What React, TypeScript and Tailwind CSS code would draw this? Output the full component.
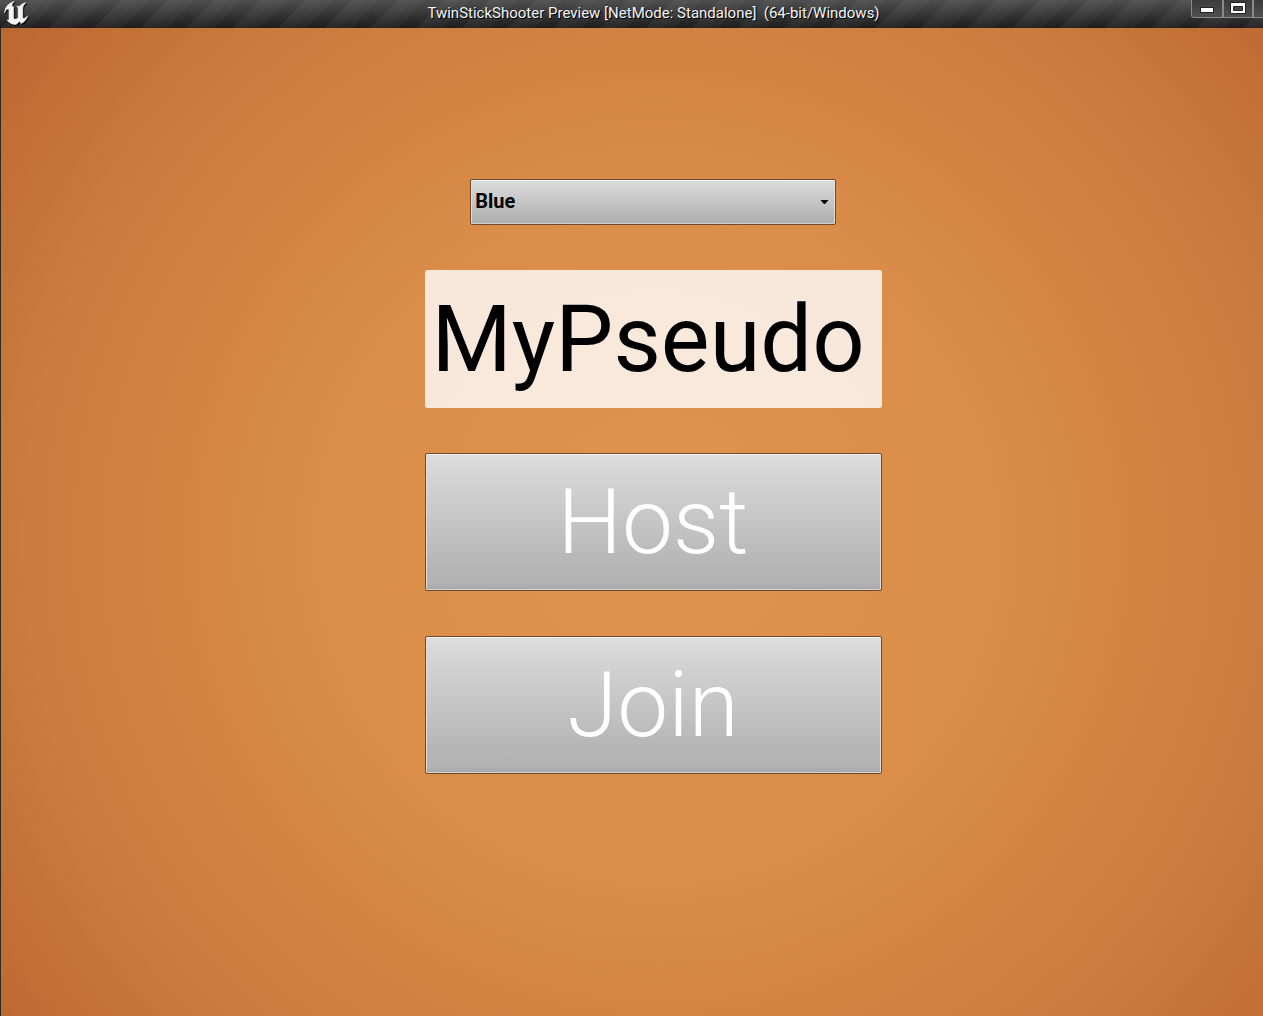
import { useState } from "react";

const buttonSkin =
  "rounded-[2px] border border-[#6f4a2c] bg-[linear-gradient(to_bottom,#dddddd_0%,#d6d6d6_12%,#c6c6c6_48%,#b5b5b5_82%,#b3b3b3_94%,#a8a8a8_100%)] shadow-[inset_0_1px_0_#f4f4f4,inset_0_-1px_0_#d2d2d2,inset_1px_0_0_#dedede,inset_-1px_0_0_#dedede]";

const captionButton =
  "flex h-[18px] items-start justify-center border border-t-0 border-[#8a8a8a] bg-linear-to-b from-[#3c3c3c] to-[#505050] pt-0.5";

function EngineLogo() {
  return (
    <svg className="h-6 w-6 drop-shadow-[1px_1px_0_#000000]" viewBox="4.3 4.4 15 15.2" preserveAspectRatio="none" fill="#f4f4f4" stroke="#f4f4f4" strokeWidth="0.3" aria-hidden="true">
      <path d="M19.13 13.729c-.206.997-1.126 3.557-4.06 4.942l-1.179-1.325-1.988 2a7.338 7.338 0 01-5.804-2.978 2.859 2.859 0 00.65.123c.326.006.678-.114.678-.66v-5.394a.89.89 0 00-1.116-.89c-.92.212-1.656 2.509-1.656 2.509a7.304 7.304 0 012.528-5.597 7.408 7.408 0 013.73-1.721c-1.006.573-1.57 1.507-1.57 2.29 0 1.262.76 1.109.984.923v7.28a1.157 1.157 0 00.148.256 1.075 1.075 0 00.88.445c.76 0 1.747-.868 1.747-.868V9.172c0-.6-.452-1.324-.905-1.572 0 0 .838-.149 1.484.346a5.537 5.537 0 01.387-.425c1.508-1.48 2.929-1.902 4.112-2.112 0 0-2.151 1.69-2.151 3.96 0 1.687.043 5.801.043 5.801.799.771 1.986-.342 3.059-1.441z" />
    </svg>
  );
}

function TitleBar() {
  return (
    <header className="flex h-7 shrink-0 items-start justify-between overflow-hidden bg-[linear-gradient(to_bottom,#575757cc,#181818bb),repeating-linear-gradient(135deg,#454545_0px,#454545_8px,#2b2b2b_8px,#2b2b2b_21px,#535353_21px,#535353_33px,#454545_33px,#454545_41px,#2b2b2b_41px,#2b2b2b_54px,#535353_54px,#535353_65px)]">
      <div className="flex flex-1 pt-px pl-1">
        <EngineLogo />
      </div>
      <h1 className="ml-10 pt-[3px] text-[15px] leading-5 whitespace-pre text-[#f2f2f2] [text-shadow:1px_1px_0_#000000]">
        {"TwinStickShooter Preview [NetMode: Standalone]  (64-bit/Windows)"}
      </h1>
      <div className="flex flex-1 justify-end">
        <button type="button" aria-label="Minimize" className={captionButton + " w-8 rounded-bl-[3px]"}>
          <svg width="16" height="13" viewBox="0 0 16 13" aria-hidden="true">
            <rect x="1.500" y="5.500" width="13" height="5" fill="#ffffff" stroke="#222222" />
          </svg>
        </button>
        <button type="button" aria-label="Maximize" className={captionButton + " w-[30px]"}>
          <svg width="16" height="13" viewBox="0 0 16 13" aria-hidden="true">
            <path d="M.5.5h15v11H.5zM3.500 4.500v4h9v-4z" fill="#ffffff" stroke="#222222" fillRule="evenodd" />
          </svg>
        </button>
        <button type="button" aria-label="Close" className={captionButton + " w-[10px] border-r-0"} />
      </div>
    </header>
  );
}

export default function App() {
  const [team, setTeam] = useState("Blue");
  const [name, setName] = useState("MyPseudo");

  return (
    <div className="flex min-h-screen flex-col font-[Roboto,sans-serif]">
      <TitleBar />
      <main className="flex flex-1 flex-col items-center border-l border-[#2f2a28] bg-[radial-gradient(circle_at_52%_52%,#e0954f_0%,#da8c49_42%,#cb7b3d_76%,#bb6831_100%)] pt-[151px] pr-4 pb-16 pl-[58px]">
        <form className="flex w-full max-w-[457px] flex-col items-center gap-[45px]" onSubmit={(e) => e.preventDefault()}>
          <div className="relative w-4/5">
            <select
              aria-label="Team colour"
              value={team}
              onChange={(e) => setTeam(e.target.value)}
              className={buttonSkin + " block h-[46px] w-full appearance-none pr-6 pb-[3px] pl-1 text-xl font-bold text-black"}
            >
              <option>Blue</option>
              <option>Red</option>
            </select>
            <svg className="pointer-events-none absolute top-5 right-[7px]" width="9" height="5" viewBox="0 0 9 5" aria-hidden="true">
              <path d="M.5 1h8L5 5H4z" fill="#000000" />
            </svg>
          </div>
          <input
            type="text"
            aria-label="Player name"
            value={name}
            onChange={(e) => setName(e.target.value)}
            className="h-[138px] w-full rounded-[3px] bg-white/80 pt-0.5 pl-[7px] text-[92px] text-black outline-none"
          />
          <button type="submit" className={buttonSkin + " h-[138px] w-full text-[91px] font-light text-white"}>
            Host
          </button>
          <button type="button" className={buttonSkin + " h-[138px] w-full text-[91px] font-light text-white"}>
            Join
          </button>
        </form>
      </main>
    </div>
  );
}
